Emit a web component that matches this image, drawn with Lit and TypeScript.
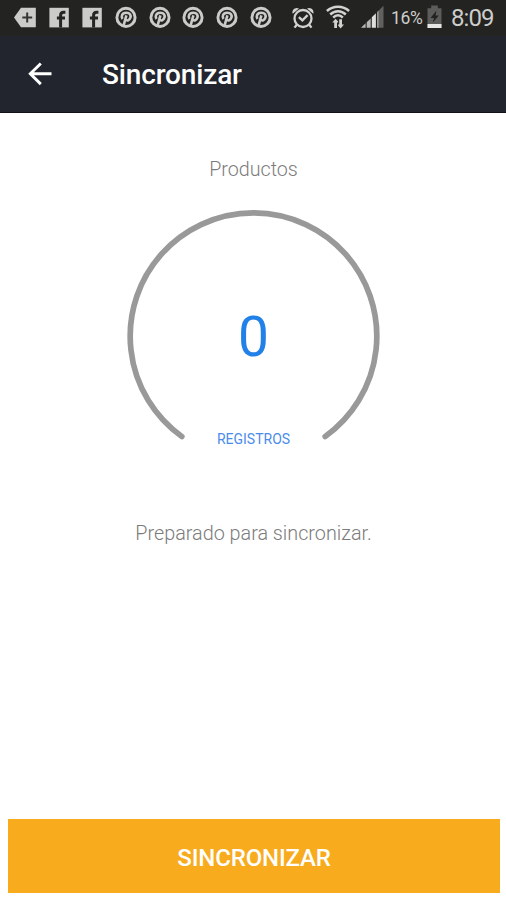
import { LitElement, html, css, svg } from "lit";
import { customElement } from "lit/decorators.js";

const box = (cls: string, width: number, body: unknown) =>
  html`<svg class=${cls} width=${width} height="28" viewBox="0 0 ${width} 28" aria-hidden="true">${body}</svg>`;

const more = svg`<path d="M8 3.8H22.8V23.2H8L1 13.5Z" fill="#cbcbc9"/><path d="M9.3 13.5H19.2M14.2 8.5V18.5" stroke="#353533" stroke-width="2"/>`;

const facebook = svg`<rect x="2.4" y="3.8" width="19.4" height="19.6" fill="#cbcbc9"/><path d="M13.6 23.4V11.2C13.6 9.2 14.6 8.2 16.6 8.2H18.4M9.9 14H18" fill="none" stroke="#252523" stroke-width="3"/>`;

const pinterest = svg`<circle cx="12" cy="13.4" r="9.1" fill="none" stroke="#cbcbc9" stroke-width="2.9"/><path d="M8.5 14.9C6.9 12.6 7.8 8.9 12.1 8.7C16 8.6 17.2 11.1 16.4 13.7C15.6 16.3 13.1 17.2 11.6 15.7M12.4 11.4L9.7 21.2" fill="none" stroke="#cbcbc9" stroke-width="2.6"/>`;

const alarm = svg`<circle cx="12" cy="14.5" r="8.5" fill="none" stroke="#d2d2d0" stroke-width="2.3"/><path d="M1.7 9.8C.4 6.2 4.2 2.6 8 4.5ZM22.3 9.8C23.6 6.2 19.8 2.6 16 4.5Z" fill="#d2d2d0"/><path d="M5.8 20.7L3.5 23.6M18.2 20.7L20.5 23.6M7.9 13.1L11.4 16.4L16.6 11.1" fill="none" stroke="#d2d2d0" stroke-width="2.3"/>`;

const wifi = svg`<g fill="none" stroke="#d2d2d0" stroke-width="2.5"><path d="M.9 7C7.2 1.3 16.8 1.3 23.1 7M4.2 10.5C8.8 6.1 15.2 6.1 19.8 10.5M7.2 13.6C10 10.6 14 10.6 16.8 13.6"/></g><path d="M8.2 24V18.6H6.2L9.6 14.8L12.1 17.6V18.6H11V24ZM13.2 15.2H16V20.6H18L14.6 24.4L12.1 21.6V20.6H13.2Z" fill="#d2d2d0"/>`;

const signal = svg`<path d="M0 23.8L4.6 19.3V23.8ZM5.7 18.3L9.7 14.4V23.8H5.7Z" fill="#b8b8b6"/><path d="M10.8 13.3L14.9 9.3V23.8H10.8Z" fill="#dededc"/><path d="M16 8.2L22.5 1.8V23.8H16Z" fill="#60605e"/><path d="M16 8.2L17.6 6.6V23.8H16Z" fill="#999997"/>`;

const battery = svg`<path d="M4.2 1.5H10.8V4.3H14.5V24H.5V4.3H4.2Z" fill="#5c5c5a"/><path d="M9.5 6.5L3.5 14H7L5.8 18.5L11.9 11.5H8.5Z" fill="#222220"/><rect x=".5" y="20" width="14" height="4" fill="#e6e6e4"/>`;

@customElement("app-root")
export class AppRoot extends LitElement {
  static styles = css`
    :host {
      display: flex;
      flex-direction: column;
      height: 900px;
      background: #fff;
      font-family: Roboto, "Liberation Sans", sans-serif;
    }
    svg { display: block; flex: none; }
    .status {
      display: flex;
      align-items: center;
      height: 36px;
      padding-left: 13px;
      background: #232321;
      color: #cdcdcb;
      box-sizing: border-box;
      white-space: nowrap;
    }
    .status svg { margin-top: -1px; }
    .notices { display: flex; gap: 9.67px; }
    .alarm { margin-left: 18px; }
    .wifi { margin-left: 11px; }
    .signal { margin-left: 11px; }
    .percent { width: 36px; margin-left: 7.5px; font-size: 17.5px; letter-spacing: -0.4px; box-sizing: border-box; }
    .clock { margin-left: 9px; font-size: 24px; letter-spacing: -1px; }
    .bar {
      display: flex;
      align-items: center;
      height: 77px;
      padding-left: 27px;
      background: #22252e;
      border-bottom: 1px solid #111319;
      box-sizing: border-box;
      color: #fff;
    }
    .title { margin: 2px 0 0 49px; font-size: 28px; font-weight: 500; line-height: 32px; letter-spacing: -0.15px; }
    main { flex: 1; display: flex; flex-direction: column; align-items: center; padding-left: 1px; color: #7c7c7c; }
    .label { margin-top: 44px; font-size: 19.7px; line-height: 26px; font-weight: 300; }
    .gauge { display: grid; width: 254px; height: 254px; margin-top: 26px; }
    .gauge > * { grid-area: 1 / 1; }
    .count { place-self: center; color: #2181e8; font-size: 55px; line-height: 64px; font-weight: 400; padding-top: 1px; }
    .unit { place-self: end center; color: #4b8ceb; font-size: 14px; line-height: 18px; margin-bottom: 15px; }
    .message { margin-top: 58px; font-size: 19.8px; line-height: 26px; font-weight: 300; }
    .sync {
      height: 74px;
      margin: 0 6px 7px 8px;
      padding: 3px 0 0;
      border: 0;
      background: #f7ab1d;
      color: #fff;
      font: 500 24px/28px Roboto, "Liberation Sans", sans-serif;
      letter-spacing: -0.15px;
    }
  `;

  render() {
    return html`
      <div class="status">
        <div class="notices">
          ${box("note", 24, more)}
          ${[1, 2].map(() => box("note", 24, facebook))}
          ${[1, 2, 3, 4, 5].map(() => box("note", 24, pinterest))}
        </div>
        ${box("alarm", 24, alarm)} ${box("wifi", 24, wifi)} ${box("signal", 23, signal)}
        <span class="percent">16%</span>
        ${box("battery", 15, battery)}
        <span class="clock">8:09</span>
      </div>
      <header class="bar">
        <svg width="26" height="26" viewBox="0 0 26 26" aria-label="Atrás">
          <path d="M13.8 2.5L3.3 12.8L13.8 23.1M3.3 12.8H24.5" fill="none" stroke="#fff" stroke-width="2.9" />
        </svg>
        <h1 class="title">Sincronizar</h1>
      </header>
      <main>
        <div class="label">Productos</div>
        <div class="gauge">
          <svg width="254" height="254" viewBox="0 0 254 254">
            <path d="M54.8 227.5A123.3 123.3 0 1 1 198.2 227.5" fill="none" stroke="#999" stroke-width="5.7" stroke-linecap="round" />
          </svg>
          <div class="count">0</div>
          <div class="unit">REGISTROS</div>
        </div>
        <div class="message">Preparado para sincronizar.</div>
      </main>
      <button class="sync">SINCRONIZAR</button>
    `;
  }
}
